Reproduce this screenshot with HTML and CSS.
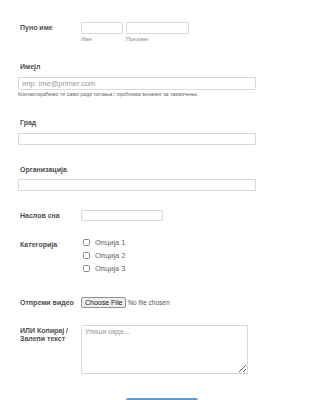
FILE: index.html
```html
<!DOCTYPE html>
<html lang="sr">
<head>
<meta charset="utf-8">
<link rel="stylesheet" href="styles.css">
</head>
<body>
<form class="form">
  <div class="field inline f-name">
    <label class="lbl-inline">Пуно име</label>
    <div class="names">
      <div class="name-col first">
        <input class="inp" type="text">
        <span class="sub">Име</span>
      </div>
      <div class="name-col last">
        <input class="inp" type="text">
        <span class="sub">Презиме</span>
      </div>
    </div>
  </div>

  <div class="field f-email">
    <label class="lbl">Имејл</label>
    <input class="inp wide email" type="text" placeholder="нпр: ime@primer.com">
    <span class="help">Контактираћемо те само ради питања / проблема везаних за такмичење.</span>
  </div>

  <div class="field f-city">
    <label class="lbl">Град</label>
    <input class="inp wide" type="text">
  </div>

  <div class="field f-org">
    <label class="lbl">Организација</label>
    <input class="inp wide" type="text">
  </div>

  <div class="field inline f-title">
    <label class="lbl-inline">Наслов сна</label>
    <input class="inp title" type="text">
  </div>

  <div class="field inline f-cat">
    <label class="lbl-inline cat-lbl">Категорија</label>
    <div class="opts">
      <div class="opt"><span class="box"></span>Опција 1</div>
      <div class="opt"><span class="box"></span>Опција 2</div>
      <div class="opt"><span class="box"></span>Опција 3</div>
    </div>
  </div>

  <div class="field inline f-file">
    <label class="lbl-inline">Отпреми видео</label>
    <div class="file">
      <span class="file-btn">Choose File</span>
      <span class="file-txt">No file chosen</span>
    </div>
  </div>

  <div class="field inline f-text">
    <label class="lbl-inline two">ИЛИ Копирај / Залепи текст</label>
    <textarea class="area" placeholder="Упиши овде..."></textarea>
  </div>

  <div class="field f-submit">
    <button type="button" class="submit"></button>
  </div>
</form>
</body>
</html>
```
FILE: styles.css
```css
html, body {
  margin: 0;
  padding: 0;
  background: #fff;
  overflow: hidden;
}
body {
  font-family: "Liberation Sans", Arial, sans-serif;
  color: #555;
}
.form {
  width: 238px;
  padding: 22px 0 0 18px;
}
.field {
  display: block;
}
.inline {
  display: flex;
  align-items: flex-start;
}
.lbl, .lbl-inline {
  font-weight: bold;
  font-size: 7px;
  color: #4d4d4d;
  display: block;
}
.lbl {
  line-height: 10px;
  padding-left: 2px;
}
.lbl-inline {
  width: 61px;
  flex: none;
  padding-left: 2px;
  line-height: 12px;
}
.inp {
  box-sizing: border-box;
  display: block;
  margin: 0;
  padding: 0 3px;
  border: 1px solid #d9d9d9;
  border-radius: 1px;
  background: #fff;
  font-family: "Liberation Sans", Arial, sans-serif;
  font-size: 7.5px;
  color: #555;
  outline: none;
}
.inp::placeholder { color: #999; }

/* full name */
.names { display: flex; gap: 3px; }
.name-col.first .inp { width: 42px; height: 12px; }
.name-col.last .inp { width: 63px; height: 12px; }
.sub {
  display: block;
  font-size: 5.5px;
  line-height: 8px;
  margin-top: 1px;
  color: #8c8c8c;
}

/* email */
.f-email { margin-top: 19px; }
.wide { width: 238px; margin-top: 5px; height: 12px; }
.email { height: 13px; }
.help {
  display: block;
  font-size: 5.3px;
  line-height: 7px;
  margin-top: 1px;
  color: #666;
  white-space: nowrap;
}

.f-city { margin-top: 20px; }
.f-org { margin-top: 20px; }
.f-org .wide { margin-top: 4px; }

.f-title { margin-top: 19px; }
.f-title .lbl-inline { line-height: 12px; }
.title { width: 82px; height: 11px; }

/* category */
.f-cat { margin-top: 14px; }
.cat-lbl { line-height: 13px; margin-top: 2px; }
.opt {
  display: flex;
  align-items: center;
  height: 13px;
  font-size: 7.5px;
  color: #666;
}
.box {
  box-sizing: border-box;
  width: 7px;
  height: 7px;
  border: 1px solid #8a8a8a;
  border-radius: 1.5px;
  margin: 0 5px 0 2px;
  background: #fff;
}

/* file */
.f-file { margin-top: 22px; }
.f-file .lbl-inline { line-height: 11px; }
.file { display: flex; align-items: center; height: 11px; }
.file-btn {
  box-sizing: border-box;
  height: 11px;
  padding: 0 3px;
  border: 1px solid #8f8f8f;
  border-radius: 2px;
  background: #efefef;
  font-size: 7px;
  line-height: 9px;
  color: #111;
}
.file-txt {
  font-size: 6.5px;
  margin-left: 2px;
  color: #555;
}

/* textarea */
.f-text { margin-top: 17px; }
.two { line-height: 8px; margin-top: 2px; }
.area {
  box-sizing: border-box;
  display: block;
  width: 167px;
  height: 49px;
  margin: 0;
  padding: 2px 3px;
  border: 1px solid #d9d9d9;
  border-radius: 1px;
  font-family: "Liberation Sans", Arial, sans-serif;
  font-size: 7px;
  outline: none;
}
.area::placeholder { color: #999; }

/* submit */
.f-submit {
  margin-top: 24px;
  padding-left: 108px;
}
.submit {
  display: block;
  width: 72px;
  height: 20px;
  border: 0;
  border-radius: 2px;
  background: #5b9bd8;
  padding: 0;
}
```
